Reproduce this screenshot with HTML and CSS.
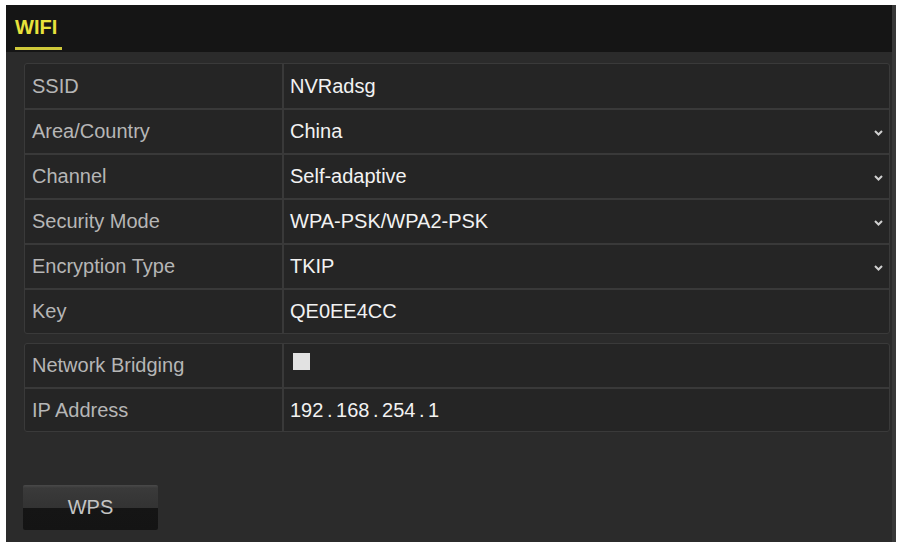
FILE: index.html
```html
<!DOCTYPE html>
<html>
<head>
<meta charset="utf-8">
<link rel="stylesheet" href="styles.css">
</head>
<body>
<div class="panel">
  <div class="header">
    <div class="tab">WIFI</div>
  </div>
  <div class="content">
    <div class="group">
      <div class="row"><div class="label">SSID</div><div class="value">NVRadsg</div></div>
      <div class="row"><div class="label">Area/Country</div><div class="value">China<svg class="chev" width="9" height="6" viewBox="0 0 9 6"><path d="M1 1 L4.5 4.5 L8 1" fill="none" stroke="#d0d0d0" stroke-width="2"/></svg></div></div>
      <div class="row"><div class="label">Channel</div><div class="value">Self-adaptive<svg class="chev" width="9" height="6" viewBox="0 0 9 6"><path d="M1 1 L4.5 4.5 L8 1" fill="none" stroke="#d0d0d0" stroke-width="2"/></svg></div></div>
      <div class="row"><div class="label">Security Mode</div><div class="value">WPA-PSK/WPA2-PSK<svg class="chev" width="9" height="6" viewBox="0 0 9 6"><path d="M1 1 L4.5 4.5 L8 1" fill="none" stroke="#d0d0d0" stroke-width="2"/></svg></div></div>
      <div class="row"><div class="label">Encryption Type</div><div class="value">TKIP<svg class="chev" width="9" height="6" viewBox="0 0 9 6"><path d="M1 1 L4.5 4.5 L8 1" fill="none" stroke="#d0d0d0" stroke-width="2"/></svg></div></div>
      <div class="row"><div class="label">Key</div><div class="value">QE0EE4CC</div></div>
    </div>
    <div class="group group2">
      <div class="row"><div class="label">Network Bridging</div><div class="value"><span class="checkbox"></span></div></div>
      <div class="row"><div class="label">IP Address</div><div class="value ip">192 . 168 . 254 . 1</div></div>
    </div>
    <div class="actions">
      <div class="btn">WPS</div>
    </div>
  </div>
</div>
</body>
</html>
```
FILE: styles.css
```css
html, body {
  margin: 0;
  padding: 0;
  background: #ffffff;
}
body {
  width: 898px;
  height: 545px;
  padding: 5px 2px 3px 6px;
  box-sizing: border-box;
  font-family: "Liberation Sans", Arial, sans-serif;
}
.panel {
  width: 890px;
  height: 537px;
  background: #2b2b2b;
  display: flex;
  flex-direction: column;
  border-right: 4px solid #383838;
  box-sizing: border-box;
}
.header {
  height: 47px;
  background: #151515;
  display: flex;
  align-items: flex-end;
  padding-left: 9px;
  box-sizing: border-box;
}
.tab {
  color: #e8e23c;
  font-size: 20px;
  font-weight: bold;
  height: 44px;
  line-height: 42px;
  padding: 0 5px 0 0;
  border-bottom: 3px solid #cfc93a;
  box-sizing: border-box;
  margin-bottom: 2px;
}
.content {
  flex: 1;
  padding: 11px 2px 0 18px;
  display: flex;
  flex-direction: column;
}
.group {
  border: 1px solid #3a3a3a;
  border-radius: 3px;
  background: #252525;
}
.group2 {
  margin-top: 9px;
}
.row {
  display: flex;
  height: 45px;
  border-top: 2px solid #393939;
  box-sizing: border-box;
}
.row:first-child {
  border-top: none;
  height: 44px;
}
.group2 .row {
  height: 44px;
}
.group2 .row:first-child {
  height: 43px;
}
.label {
  flex: none;
  width: 259px;
  border-right: 2px solid #393939;
  display: flex;
  align-items: center;
  padding-left: 7px;
  color: #b6b6b6;
  font-size: 20px;
  box-sizing: border-box;
}
.value {
  flex: 1;
  display: flex;
  align-items: center;
  padding-left: 6px;
  padding-right: 6px;
  color: #f2f2f2;
  font-size: 20px;
}
.ip {
  word-spacing: -2px;
}
.chev {
  margin-left: auto;
  margin-top: 3px;
}
.checkbox {
  display: block;
  width: 17px;
  height: 17px;
  margin-left: 3px;
  margin-top: -8px;
  background: #e2e2e2;
}
.actions {
  margin-top: 53px;
}
.btn {
  width: 135px;
  height: 45px;
  margin-left: -1px;
  background: linear-gradient(to bottom, #4a4a4a 0px, #3a3a3a 3px, #333333 50%, #151515 50%, #141414 100%);
  color: #c4c4c4;
  font-size: 20px;
  display: flex;
  align-items: center;
  justify-content: center;
  border-radius: 2px;
}
```
